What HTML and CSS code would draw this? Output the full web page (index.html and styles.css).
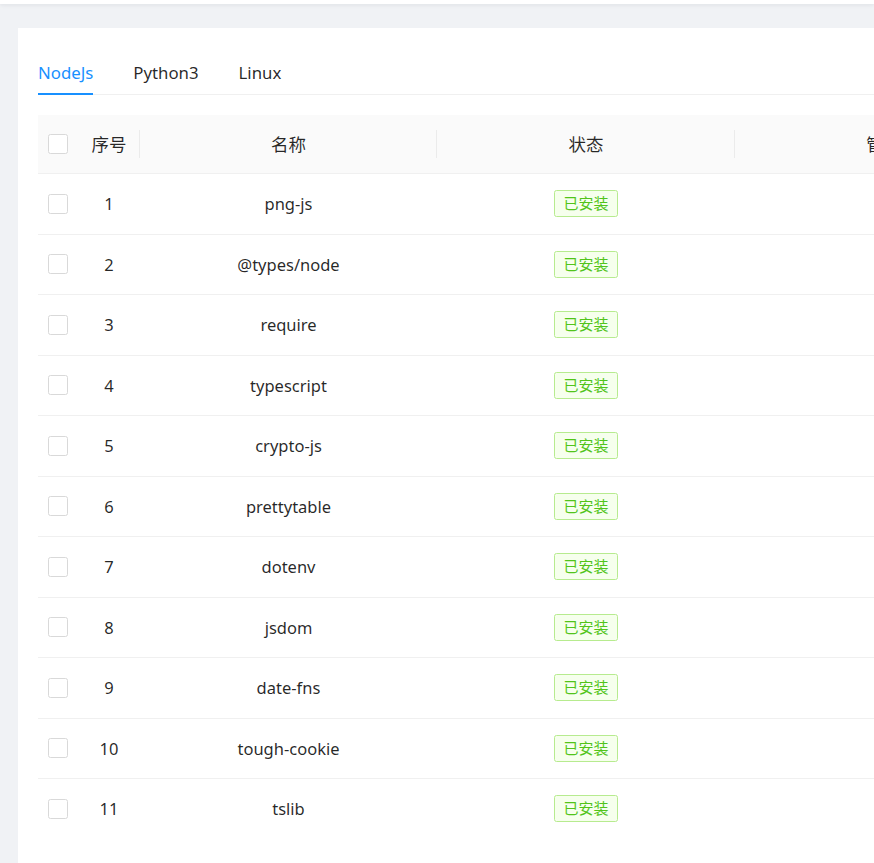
FILE: index.html
```html
<!DOCTYPE html>
<html lang="zh-CN">
<head>
<meta charset="utf-8">
<title>依赖管理</title>
<link rel="stylesheet" href="styles.css">
</head>
<body>
<div class="topbar"></div>
<main class="main">
  <section class="card">
    <nav class="tabs">
      <div class="tab active">NodeJs</div>
      <div class="tab">Python3</div>
      <div class="tab">Linux</div>
    </nav>
    <div class="table">
      <div class="row head">
        <div class="cell"><span class="checkbox"></span></div>
        <div class="cell sep">序号</div>
        <div class="cell sep">名称</div>
        <div class="cell sep">状态</div>
        <div class="cell">管理</div>
      </div>
      <div class="row"><div class="cell"><span class="checkbox"></span></div><div class="cell">1</div><div class="cell">png-js</div><div class="cell"><span class="tag">已安装</span></div><div class="cell"></div></div>
      <div class="row"><div class="cell"><span class="checkbox"></span></div><div class="cell">2</div><div class="cell">@types/node</div><div class="cell"><span class="tag">已安装</span></div><div class="cell"></div></div>
      <div class="row"><div class="cell"><span class="checkbox"></span></div><div class="cell">3</div><div class="cell">require</div><div class="cell"><span class="tag">已安装</span></div><div class="cell"></div></div>
      <div class="row"><div class="cell"><span class="checkbox"></span></div><div class="cell">4</div><div class="cell">typescript</div><div class="cell"><span class="tag">已安装</span></div><div class="cell"></div></div>
      <div class="row"><div class="cell"><span class="checkbox"></span></div><div class="cell">5</div><div class="cell">crypto-js</div><div class="cell"><span class="tag">已安装</span></div><div class="cell"></div></div>
      <div class="row"><div class="cell"><span class="checkbox"></span></div><div class="cell">6</div><div class="cell">prettytable</div><div class="cell"><span class="tag">已安装</span></div><div class="cell"></div></div>
      <div class="row"><div class="cell"><span class="checkbox"></span></div><div class="cell">7</div><div class="cell">dotenv</div><div class="cell"><span class="tag">已安装</span></div><div class="cell"></div></div>
      <div class="row"><div class="cell"><span class="checkbox"></span></div><div class="cell">8</div><div class="cell">jsdom</div><div class="cell"><span class="tag">已安装</span></div><div class="cell"></div></div>
      <div class="row"><div class="cell"><span class="checkbox"></span></div><div class="cell">9</div><div class="cell">date-fns</div><div class="cell"><span class="tag">已安装</span></div><div class="cell"></div></div>
      <div class="row"><div class="cell"><span class="checkbox"></span></div><div class="cell">10</div><div class="cell">tough-cookie</div><div class="cell"><span class="tag">已安装</span></div><div class="cell"></div></div>
      <div class="row"><div class="cell"><span class="checkbox"></span></div><div class="cell">11</div><div class="cell">tslib</div><div class="cell"><span class="tag">已安装</span></div><div class="cell"></div></div>
    </div>
  </section>
</main>
</body>
</html>
```

FILE: styles.css
```css
html, body {
  margin: 0;
  padding: 0;
  height: 100%;
  overflow: hidden;
}
body {
  background: #f0f2f5;
  font-family: "Noto Sans", "Noto Sans CJK SC", sans-serif;
  font-size: 16.5px;
  color: rgba(0, 0, 0, 0.85);
}
.topbar {
  height: 4px;
  background: #fff;
  box-shadow: 0 1px 4px rgba(0, 21, 41, 0.08);
}
.main {
  padding: 24px 0 0 18px;
}
.card {
  width: 1200px;
  background: #fff;
  padding: 25px 20px 40px 20px;
  min-height: 900px;
}
.tabs {
  display: flex;
  gap: 40px;
  border-bottom: 1px solid #f0f0f0;
}
.tab {
  height: 42px;
  box-sizing: border-box;
  display: flex;
  align-items: center;
  line-height: 1;
  font-size: 16.8px;
  border-bottom: 2px solid transparent;
  margin-bottom: -1px;
  color: rgba(0, 0, 0, 0.85);
}
.tab.active {
  color: #1890ff;
  border-bottom-color: #1890ff;
}
.table {
  margin-top: 20px;
}
.row {
  display: grid;
  grid-template-columns: 40px 62px 297px 298px 297px;
  height: 60.5px;
  box-sizing: border-box;
  border-bottom: 1px solid #f0f0f0;
}
.row:last-child {
  border-bottom-color: transparent;
}
.row.head {
  height: 59px;
  background: #fafafa;
  font-size: 17.5px;
}
.cell {
  display: flex;
  align-items: center;
  justify-content: center;
  position: relative;
  line-height: 1.5;
}
.row:not(.head) .cell {
  padding-top: 1.5px;
}
.cell.sep::after {
  content: "";
  position: absolute;
  right: 0;
  top: 50%;
  width: 1px;
  height: 28px;
  margin-top: -14px;
  background: rgba(0, 0, 0, 0.06);
}
.checkbox {
  width: 20px;
  height: 20px;
  box-sizing: border-box;
  border: 1px solid #d9d9d9;
  border-radius: 2.5px;
  background: #fff;
}
.row:not(.head) .checkbox,
.tag {
  margin-top: -1.5px;
}
.tag {
  display: inline-block;
  font-size: 15px;
  line-height: 25px;
  padding: 0 8.75px;
  color: #52c41a;
  background: #f6ffed;
  border: 1px solid #b7eb8f;
  border-radius: 2.5px;
}
```
